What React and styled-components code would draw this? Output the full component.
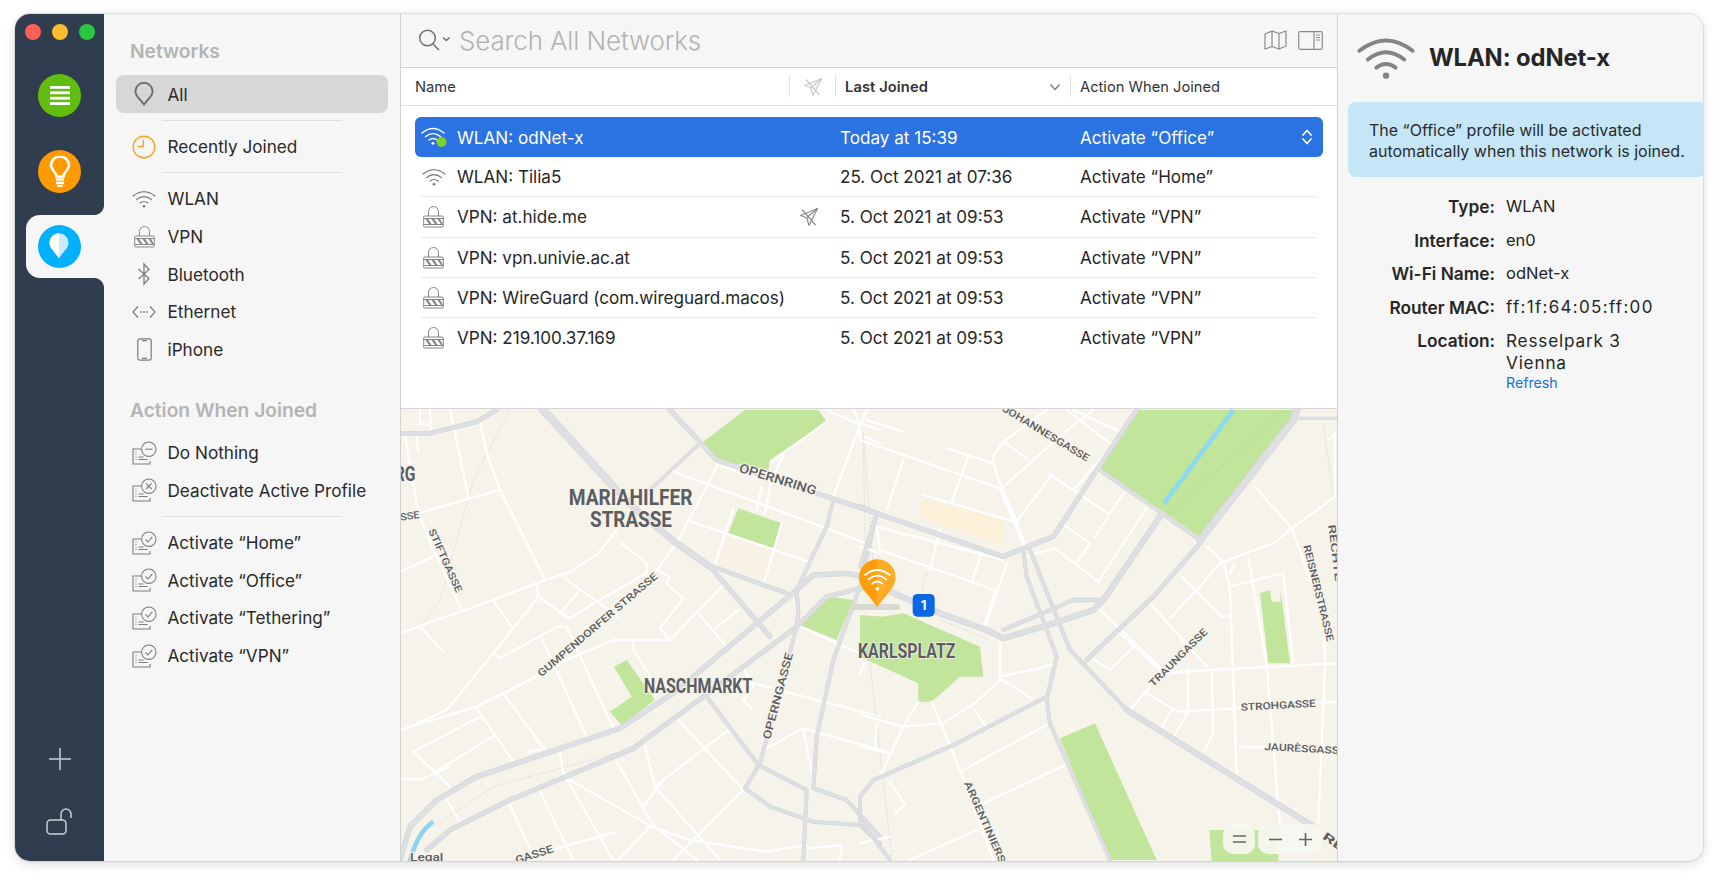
import React from "react";
import styled, { createGlobalStyle } from "styled-components";

const Global = createGlobalStyle`
  html, body { margin: 0; padding: 0; background: #fff; }
  body { font-family: Inter, "Liberation Sans", sans-serif; color: #262626; width: 1720px; height: 880px; overflow: hidden; }
  * { box-sizing: border-box; }
`;

const Stage = styled.div`padding: 14px 0 0 15px;`;
const Win = styled.div`
  width: 1688px; height: 847px; display: flex; border-radius: 15px; overflow: hidden;
  box-shadow: 0 0 2px rgba(0,0,0,.35), 0 3px 12px rgba(0,0,0,.13);
`;

/* ---------- rail ---------- */
const Rail = styled.nav`
  width: 89px; background: #2f3d4e; display: flex; flex-direction: column; align-items: center; padding-top: 10px;
`;
const Lights = styled.div`display: flex; gap: 11px; margin-bottom: 34px;`;
const Light = styled.span`width: 16px; height: 16px; border-radius: 50%; background: ${p => p.$c};`;
const RailCircle = styled.div`
  width: 43px; height: 43px; border-radius: 50%; background: ${p => p.$c};
  display: flex; align-items: center; justify-content: center; flex: none;
`;
const RailGap = styled.div`height: ${p => p.$h}px; flex: none;`;
const ActiveTab = styled.div`
  position: relative; align-self: flex-end; width: 78px; height: 63px; margin-top: 22px; background: #f6f6f6;
  border-radius: 14px 0 0 14px; display: flex; align-items: center; padding-left: 11.5px;
  &::before, &::after { content: ""; position: absolute; right: 0; width: 10px; height: 10px; }
  &::before { top: -10px; background: radial-gradient(circle at 0 0, #2f3d4e 9.5px, #f6f6f6 10.5px); }
  &::after { bottom: -10px; background: radial-gradient(circle at 0 100%, #2f3d4e 9.5px, #f6f6f6 10.5px); }
`;
const RailSpacer = styled.div`flex: 1;`;
const RailButton = styled.div`display: flex; align-items: center; justify-content: center; height: ${p => p.$h}px;`;

/* ---------- sidebar ---------- */
const Sidebar = styled.aside`
  width: 297px; background: #f6f6f6; border-right: 1px solid #d2d2d2; padding: 23px 12px 0; display: flex; flex-direction: column;
`;
const SectionTitle = styled.h2`
  margin: ${p => p.$top || 0}px 0 10px; padding-left: 14px; font-size: 19.2px; line-height: 28px; font-weight: 600; color: #b4b4b4;
`;
const NavRow = styled.div`
  height: ${p => p.$active ? 38 : 37.6}px; display: flex; align-items: center; padding-left: 10px; border-radius: 8px;
  background: ${p => p.$active ? "#d7d7d7" : "transparent"}; font-size: 17.15px; color: #2a2a2a; flex: none;
`;
const NavIcon = styled.span`width: 36px; margin-right: 5.5px; display: flex; justify-content: center; align-items: center; flex: none;`;
const NavRule = styled.div`height: 1px; width: 180px; margin: 6.5px 0 7.25px 46px; background: #e0e0e0; flex: none;`;

/* ---------- main ---------- */
const Main = styled.main`width: 937px; border-right: 1px solid #d2d2d2; display: flex; flex-direction: column; background: #fff;`;
const SearchBar = styled.div`
  height: 54px; background: #f6f6f6; border-bottom: 1px solid #d4d4d4; display: flex; align-items: center; padding: 0 14px 1px 17px; flex: none;
`;
const SearchPlaceholder = styled.span`font-size: 25.9px; font-weight: 300; color: #b3b3b3; margin-left: 7px; flex: 1; letter-spacing: -.1px;`;
const ToolIcons = styled.div`display: flex; gap: 11px; align-items: center;`;
const TablePane = styled.section`height: 340px; flex: none; display: flex; flex-direction: column; background: #fff;`;
const HeadRow = styled.div`
  height: 38px; border-bottom: 1px solid #e2e2e2; display: flex; align-items: center; padding-left: 14px; font-size: 14.7px; color: #333; flex: none;
`;
const HeadCell = styled.div`
  width: ${p => p.$w}px; display: flex; align-items: center; padding-left: ${p => p.$pad || 0}px; justify-content: ${p => p.$center ? "center" : "flex-start"};
  font-weight: ${p => p.$bold ? 600 : 400}; flex: none;
`;
const HeadLabel = styled.span`flex: 1; letter-spacing: .1px;`;
const HeadRule = styled.span`width: 1px; height: 21px; background: #dedede; flex: none;`;
const SortChevron = styled.svg`margin-right: 9px; flex: none;`;
const TableBody = styled.div`padding-top: 11px;`;
const Row = styled.div`
  height: ${p => p.$sel ? 40 : 39.33}px; margin: 0 14px; display: grid; grid-template-columns: 42px 383px 240px 1fr; align-items: center;
  background: ${p => p.$sel ? "#2b72e2" : "transparent"}; color: ${p => p.$sel ? "#fff" : "#262626"}; border-radius: 6px; font-size: 17.1px;
`;
const RowIcon = styled.span`display: flex; justify-content: center; padding-left: 1px; padding-right: 6px;`;
const NameCell = styled.span`display: flex; align-items: center; justify-content: space-between; padding-right: 21px;`;
const ActionCell = styled.span`display: flex; align-items: center; justify-content: space-between; padding-right: 10px;`;
const RowRule = styled.div`height: 1px; margin: 0 21px 0 20px; background: #e8e8e8;`;
const MapPane = styled.section`position: relative; flex: 1; border-top: 1px solid #d6d6d6; background: #f6f3ea; overflow: hidden;`;
const MapArt = styled.svg`display: block; width: 936px; height: 452px;`;
const MapControls = styled.div`position: absolute; right: 15px; bottom: 7px; display: flex; gap: 3px;`;
const MapBtn = styled.div`
  height: 30px; width: ${p => p.$w}px; border-radius: 10px; background: rgba(247,247,242,.9); color: #555; display: flex; align-items: center;
  justify-content: space-around; padding: 0 2px;
`;

/* ---------- inspector ---------- */
const Inspector = styled.aside`flex: 1; background: #f6f6f6; display: flex; flex-direction: column;`;
const InspHead = styled.header`height: 88px; display: flex; align-items: center; padding-left: 19px; gap: 14px; flex: none;`;
const InspTitle = styled.h1`margin: 0; font-size: 23.8px; font-weight: 700; color: #262626; letter-spacing: -.1px; padding-bottom: 1px;`;
const Notice = styled.p`
  margin: 0 0 13px 10px; height: 75px; padding: 18px 0 0 21px; background: #c5e6f6; border-radius: 8px 4px 4px 8px; font-size: 16px; line-height: 20.5px; color: #2a2a2a;
`;
const Details = styled.dl`margin: 0; display: grid; grid-template-columns: 157px 1fr; column-gap: 11px;`;
const Label = styled.dt`text-align: right; font-weight: 600; font-size: 17.3px; line-height: 33.6px;`;
const Value = styled.dd`margin: 0; font-size: ${p => p.$wide ? 17 : 16.5}px; line-height: 33.6px; letter-spacing: ${p => p.$wide ? "1.3px" : "0"};`;
const ValueStack = styled.dd`margin: 0; padding-top: 5.3px; font-size: 17.2px; line-height: 22px; letter-spacing: .8px;`;
const Refresh = styled.div`font-size: 14.2px; line-height: 16px; color: #1a6fe0; letter-spacing: 0; margin-top: 1px;`;

/* ---------- icons ---------- */
const WifiGlyph = ({ w = 24, h = 18, c = "#777", sw = 1.2 }) => (
  <svg width={w} height={h} viewBox="0 0 24 18" fill="none" stroke={c} strokeWidth={sw} strokeLinecap="round">
    <path d="M1 6Q12-2.5 23 6" /><path d="M4.500 9.600Q12 3.600 19.500 9.600" /><path d="M8 13Q12 10 16 13" />
    <circle cx="12" cy="16.300" r="1.300" fill={c} stroke="none" />
  </svg>
);
const LockGlyph = ({ c = "#8a8a8a" }) => (
  <svg width="21" height="23" viewBox="0 0 21 23" fill="none" stroke={c} strokeWidth="1">
    <path d="M5.500 11V6.500a5 5 0 0 1 10 0V11" />
    <rect x=".7" y="11" width="19.600" height="11" rx="1" />
    <path d="M.7 13.500h19.600M.7 19.500h19.600" />
    <path d="M2.500 14l3.500 5h2.600l-3.500-5zM8.500 14l3.500 5h2.600l-3.500-5zM14.500 14l3.500 5h2l-3-5z" fill={c} stroke="none" />
  </svg>
);
const Bt = () => (
  <svg width="16" height="24" viewBox="0 0 16 24" fill="none" stroke="#7f7f7f" strokeWidth="1.300"><path d="M2.500 7 13 16.500 8 22V2l5 5.500L2.500 17" /></svg>
);
const Eth = () => (
  <svg width="24" height="14" viewBox="0 0 24 14" fill="none" stroke="#7f7f7f" strokeWidth="1.200">
    <path d="M6 1.500.9 7 6 12.500M18 1.500 23.100 7 18 12.500" />
    <circle cx="9" cy="7" r=".9" fill="#7f7f7f" stroke="none" /><circle cx="12" cy="7" r=".9" fill="#7f7f7f" stroke="none" /><circle cx="15" cy="7" r=".9" fill="#7f7f7f" stroke="none" />
  </svg>
);
const Phone = () => (
  <svg width="15" height="23" viewBox="0 0 15 23" fill="none" stroke="#7f7f7f" strokeWidth="1.200">
    <rect x=".8" y=".8" width="13.400" height="21.400" rx="2.200" /><path d="M5 2.700h5M5 20.300h5" />
  </svg>
);
const PinOutline = () => (
  <svg width="20" height="24" viewBox="0 0 20 24" fill="none" stroke="#6f6f6f" strokeWidth="1.900">
    <path d="M10 22.600C7.500 18.400 1.400 14.500 1.400 9.400a8.600 8.600 0 0 1 17.200 0c0 5.100-6.100 9-8.600 13.200Z" />
  </svg>
);
const Clock = () => (
  <svg width="24" height="24" viewBox="0 0 24 24" fill="none" stroke="#f5a623" strokeWidth="1.400">
    <circle cx="12" cy="12" r="10.800" /><path d="M11.300 5v6.500H5.500" />
  </svg>
);
const Profile = ({ kind }) => (
  <svg width="25" height="24" viewBox="0 0 25 24" fill="none" stroke="#7d7d7d" strokeWidth="1.100">
    <path d="M9 8H1v15h17v-3" />
    <path d="M3.500 11h1M3.500 13.500h1M3.500 16h1M6.500 16h5M6.500 18.500h9M3.500 18.500h1" strokeWidth="1.200" />
    <circle cx="16.800" cy="8.200" r="7.200" fill="#f6f6f6" />
    {kind === "none" && <path d="M13 8.200h7.600" />}
    {kind === "x" && <path d="M14 5.400l5.600 5.600M19.600 5.400 14 11" />}
    {kind === "check" && <path d="M13.400 8.400l2.500 2.600 4.400-5.200" />}
  </svg>
);
const Plane = ({ c }) => (
  <svg width="20" height="20" viewBox="0 0 20 20" fill="none" stroke={c} strokeWidth="1.200" strokeLinejoin="round">
    <path d="M18.500 1.500 1.500 8.500l6.200 2.200 2.300 7.800z" /><path d="M18.500 1.500 7.700 10.700M3 2.500 16.500 18" />
  </svg>
);
const Stepper = () => (
  <svg width="12" height="16" viewBox="0 0 12 16" fill="none" stroke="#fff" strokeWidth="1.700" strokeLinecap="round" strokeLinejoin="round">
    <path d="M2 6 6 1.500 10 6M2 10l4 4.500L10 10" />
  </svg>
);

/* ---------- map data, in the 3x coordinates of two overlapping tiles ---------- */
const westWhite = [
  "60,30 60,70 90,75", "90,30 95,95", "150,30 205,290", "15,110 55,340 110,470 185,630", "50,110 55,155", "0,355 300,270",
  "240,70 260,160 300,270 435,540", "0,515 100,470", "0,700 280,600 410,550 510,515 590,465 650,390", "280,600 335,680", "65,685 130,755",
  "410,550 415,590 510,655 590,605 740,520 740,490 665,430", "495,525 500,540 655,650", "535,575 480,640 510,655", "415,590 280,760 140,930 30,980",
  "280,760 300,775 470,680 500,680 640,985", "425,715 560,1010", "0,990 230,920 420,825 500,780 640,720 810,720 970,555",
  "810,720 780,685 850,595 800,550 810,530 770,510 830,430 950,200", "700,725 700,750 770,860", "895,640 980,740", "945,685 1015,630",
  "310,880 435,1050", "230,925 340,1085", "40,1055 240,950", "40,1055 150,1160", "100,1120 285,1005", "0,1135 60,1140 150,1100", "385,1055 435,1045",
  "480,1060 490,1120 640,1380", "420,1175 520,1380", "330,1215 405,1380", "140,1200 185,1275", "650,1085 760,1275 890,1380",
  "510,1140 755,1280 870,1320 1100,1355 1220,1335", "735,1040 765,1160 960,1380", "765,1160 790,1140 985,990", "835,960 1030,1170", "1030,1170 820,1380",
  "730,1220 790,1140", "1060,850 1440,950", "1030,800 1060,860 1030,900 1055,925", "1100,1045 1210,985 1440,1050", "950,195 1300,300 1440,350",
  "820,215 1400,430", "860,360 1225,485", "1000,325 945,495", "1145,370 1095,540", "1085,260 1070,330", "1115,240 1095,340", "1115,185 1280,65",
  "1150,165 1115,240", "1360,30 1380,70 1440,90", "1280,30 1380,75 1300,290", "1395,110 1440,130", "1200,680 1400,770 1380,820", "350,1380 650,1295",
  "650,1385 750,1280", "1210,985 1245,1165", "1225,1345 1325,1335 1320,1380",
];
const eastWhite = [
  "20,30 0,80 0,120 420,265 490,435", "20,60 130,95", "260,145 400,190", "190,285 460,365", "130,180 80,330", "325,170 275,305",
  "400,170 430,125 560,30", "430,125 500,175", "400,165 400,190 425,265 470,365 495,435", "425,265 610,100 700,30", "570,225 745,340", "620,30 750,130",
  "640,270 790,100", "640,30 790,100", "575,225 470,365", "790,280 705,410", "860,325 715,545 585,445", "605,370 690,430 650,490", "585,445 490,470",
  "50,380 430,480", "50,385 60,450 405,570 375,670", "240,390 210,510", "365,460 335,545", "440,490 380,670", "0,440 60,460",
  "720,630 920,820 1050,810 1430,790", "690,770 750,810 825,735", "780,700 900,810", "870,610 1040,800", "930,655 1000,580 1085,485", "965,530 1085,650 1110,645",
  "1040,440 1090,485 1240,430 1295,385 1425,290", "1185,260 1295,385 1390,640 1395,790 1375,1270", "1090,485 1110,570 1130,1120", "1110,560 1270,520 1300,790",
  "1165,470 1220,790 1260,1280", "1125,490 1110,520", "870,860 815,925", "860,880 955,935 1130,925 1430,905", "985,810 985,935 945,1005", "1055,810 1060,1000 1035,1050",
  "935,930 905,980", "1140,1040 1430,1050", "420,730 420,840 350,905 250,970 130,980 0,945", "420,830 580,795", "420,835 515,895", "345,930 375,975",
  "175,905 130,980 60,1130", "215,905 300,1110 400,1380", "50,970 45,1045 90,1060", "0,1040 90,1060", "300,1115 560,975", "350,1220 615,1095", "150,1380 350,1290",
  "90,1145 135,1215 105,1240", "1405,120 1425,100 1425,290", "0,1330 90,1310",
];
const westGray = [
  [22, "430,30 640,260"], [18, "640,260 720,340 830,430 930,500"], [13, "930,500 1110,710"], [12, "0,100 90,100 230,65 290,30"],
  [13, "810,30 950,180 1280,290 1430,340"], [8, "750,270 900,130"], [14, "0,1380 30,1280 110,1200 230,1130 660,985 820,880 1190,570 1240,525 1340,520 1390,530"],
  [13, "80,1350 150,1290 330,1200 700,1045 910,890 1190,680 1280,590 1380,565 1440,565"], [11, "940,500 1160,580"], [10, "1300,300 1280,380 1190,570 1195,640 1190,680 1150,830 1080,1090 1035,1165 1110,1220 1240,1265 1380,1275 1440,1330"],
  [10, "920,890 1075,1095 1220,1170 1210,1380"], [10, "1380,560 1300,780 1250,1010 1240,1165 1340,1200 1440,1310"], [10, "1430,340 1380,560"],
];
const eastGray = [
  [13, "0,320 50,340 430,470 490,445 580,410 710,210 830,30"], [10, "50,340 0,500"], [16, "80,570 240,640 380,690 430,715 580,670 700,630 730,600 900,350"],
  [11, "430,690 640,600 730,600"], [10, "720,210 1020,420"], [20, "1020,420 1300,60 1310,30"], [12, "1020,430 880,590 680,780"],
  [10, "490,450 500,530 590,770 560,900 570,970 750,1380"], [10, "510,450 630,750 800,930"], [16, "800,930 1360,1280"], [10, "560,890 270,1040 40,1140 0,1190 0,1260 90,1380"],
  [8, "1320,55 1430,55"],
];
const westRails = ["330,30 220,240 120,600 60,680", "1390,100 1420,500", "100,1280 280,1160 700,1045"];
const eastRails = ["10,130 20,700 95,1370", "1390,70 1420,290", "200,520 180,590", "380,715 240,660"];
const Poly = ({ pts, w, c }) => <polyline points={pts} fill="none" stroke={c} strokeWidth={w} strokeLinejoin="round" strokeLinecap="round" />;
const RailLine = ({ pts }) => <polyline points={pts} fill="none" stroke="#d6d6d2" strokeWidth="2.500" strokeDasharray="7 5" />;
const MapLabel = ({ x, y, r = 0, len, size = 30, bold, children }) => (
  <text
    transform={`translate(${x} ${y}) rotate(${r})`} textLength={len} lengthAdjust="spacingAndGlyphs"
    fontFamily="Roboto, Inter, sans-serif" fontSize={size} fontWeight={bold ? 700 : 500} fill="#5b5d60"
    stroke="#f6f3ea" strokeWidth={bold ? 5 : 6} paintOrder="stroke"
  >{children}</text>
);
const CityMap = () => (
  <MapArt viewBox="401 409 936 452">
    <g transform="translate(400 400) scale(.33333)">
      <g fill="#c1e59a">
        <polygon points="910,125 1035,30 1255,30 1280,65 1110,180 1105,210 950,180" />
        <polygon points="1015,325 1145,370 1120,445 985,400" />
        <polygon points="642,800 680,780 765,900 665,975 630,935 695,890" />
        <polygon points="1200,675 1310,720 1360,600 1290,590" />
      </g>
      <polygon points="985,400 1120,445 1095,540 945,495" fill="#f7f2e5" />
      <path d="M30 1385Q50 1300 100 1265" fill="none" stroke="#8fd3ee" strokeWidth="14" />
      {westRails.map(p => <RailLine key={p} pts={p} />)}
      {westWhite.map(p => <Poly key={p} pts={p} w={7} c="#fff" />)}
      {westGray.map(([w, p]) => <Poly key={p} pts={p} w={w + 2} c="#cdced2" />)}
      {westGray.map(([w, p]) => <Poly key={p + "i"} pts={p} w={w} c="#dedfe2" />)}
      <MapLabel x={506} y={315} len={372} size={64} bold>MARIAHILFER</MapLabel>
      <MapLabel x={570} y={380} len={246} size={64} bold>STRASSE</MapLabel>
      <MapLabel x={732} y={880} len={325} size={60} bold>NASCHMARKT</MapLabel>
      <MapLabel x={1015} y={215} r={17} len={240} size={38}>OPERNRING</MapLabel>
      <MapLabel x={85} y={392} r={66} len={205} size={30}>STIFTGASSE</MapLabel>
      <MapLabel x={424} y={832} r={-40.5} len={462} size={30}>GUMPENDORFER STRASSE</MapLabel>
      <MapLabel x={1110} y={1020} r={-75} len={268} size={33}>OPERNGASSE</MapLabel>
      <MapLabel x={2} y={362} r={-8} len={58} size={30}>SSE</MapLabel>
      <MapLabel x={-16} y={242} len={62} size={58} bold>RG</MapLabel>
      <MapLabel x={350} y={1392} r={-18} len={118} size={32}>GASSE</MapLabel>
      <MapLabel x={30} y={1382} len={100} size={34}>Legal</MapLabel>
    </g>
    <g transform="translate(860 400) scale(.33333)">
      <g fill="#c1e59a">
        <polygon points="720,205 830,30 1300,30 1290,70 1020,410" />
        <polygon points="0,645 70,650 130,640 360,740 370,830 300,830 215,905 175,905 175,850 0,770" />
        <polygon points="600,1015 705,970 890,1380 750,1380" />
        <polygon points="1200,580 1230,570 1235,605 1262,605 1262,570 1290,790 1225,790" />
        <polygon points="1048,1290 1255,1290 1255,1384 1055,1384" />
      </g>
      <polygon points="190,295 430,360 425,435 180,350" fill="#fdf0d8" />
      <path d="M912 310 1120 30" fill="none" stroke="#8fd8ee" strokeWidth="14" />
      <path d="M925 345 1270 30" fill="none" stroke="#b9d4a0" strokeWidth="2" />
      {eastRails.map(p => <RailLine key={p} pts={p} />)}
      {eastWhite.map(p => <Poly key={p} pts={p} w={7} c="#fff" />)}
      {eastGray.map(([w, p]) => <Poly key={p} pts={p} w={w + 2} c="#cdced2" />)}
      {eastGray.map(([w, p]) => <Poly key={p + "i"} pts={p} w={w} c="#dedfe2" />)}
      <rect x="-30" y="612" width="150" height="18" rx="8" fill="#d9d9d4" />
      <MapLabel x={425} y={32} r={31} len={298} size={30}>JOHANNESGASSE</MapLabel>
      <MapLabel x={-6} y={773} len={292} size={58} bold>KARLSPLATZ</MapLabel>
      <MapLabel x={880} y={862} r={-45} len={232} size={30}>TRAUNGASSE</MapLabel>
      <MapLabel x={1143} y={932} r={-3} len={225} size={30}>STROHGASSE</MapLabel>
      <MapLabel x={1213} y={1050} r={3} len={244} size={30}>JAURÈSGASSE</MapLabel>
      <MapLabel x={1330} y={438} r={76} len={296} size={30}>REISNERSTRASSE</MapLabel>
      <MapLabel x={1405} y={375} r={83} len={170} size={30}>RECHTE</MapLabel>
      <MapLabel x={312} y={1150} r={66} len={310} size={30}>ARGENTINIERSTR</MapLabel>
      <MapLabel x={1385} y={1315} r={35} len={70} size={34} bold>RE</MapLabel>
      <defs>
        <linearGradient id="pinFill" x1="0" x2="1"><stop offset=".5" stopColor="#ff9d0a" /><stop offset=".5" stopColor="#ffab26" /></linearGradient>
      </defs>
      <path d="M52 622C22 580-3 562-3 532-3 502 22 478 52 478S107 502 107 532C107 562 82 580 52 622Z" fill="url(#pinFill)" />
      <g fill="none" stroke="#fff" strokeWidth="5.500" strokeLinecap="round">
        <path d="M15 525Q52 495 89 525" /><path d="M26 538Q52 516 78 538" /><path d="M37 551Q52 538 67 551" />
      </g>
      <circle cx="52" cy="566" r="5.500" fill="#fff" />
      <rect x="158" y="582" width="66" height="68" rx="14" fill="#0a66e4" />
      <text x="191" y="630" textAnchor="middle" fontFamily="Inter, sans-serif" fontWeight="700" fontSize="40" fill="#fff">1</text>
    </g>
  </MapArt>
);

const networks = [
  ["wifi", "WLAN: Tilia5", "25. Oct 2021 at 07:36", "Activate “Home”"],
  ["vpn", "VPN: at.hide.me", "5. Oct 2021 at 09:53", "Activate “VPN”", true],
  ["vpn", "VPN: vpn.univie.ac.at", "5. Oct 2021 at 09:53", "Activate “VPN”"],
  ["vpn", "VPN: WireGuard (com.wireguard.macos)", "5. Oct 2021 at 09:53", "Activate “VPN”"],
  ["vpn", "VPN: 219.100.37.169", "5. Oct 2021 at 09:53", "Activate “VPN”"],
];

const Nav = ({ icon, children, active }) => (
  <NavRow $active={active}><NavIcon>{icon}</NavIcon>{children}</NavRow>
);

export default function App() {
  return (
    <Stage>
      <Global />
      <Win>
        <Rail>
          <Lights><Light $c="#ff5f57" /><Light $c="#febc2e" /><Light $c="#28c840" /></Lights>
          <RailCircle $c="#63bd10">
            <svg width="20" height="19" viewBox="0 0 20 19" fill="#fff"><rect y="0" width="20" height="2.800" /><rect y="5.400" width="20" height="2.800" /><rect y="10.800" width="20" height="2.800" /><rect y="16.200" width="20" height="2.800" /></svg>
          </RailCircle>
          <RailGap $h={32.5} />
          <RailCircle $c="#ff9a00">
            <svg width="22" height="31" viewBox="0 0 22 31" fill="none" stroke="#fff" strokeWidth="2.600">
              <path d="M7.500 20.500C7.500 16 2 14 2 9.500a9 9 0 0 1 18 0c0 4.500-5.500 6.500-5.500 11z" />
              <path d="M7 23.500h8M7 27h8" /><path d="M8.500 30h5" strokeWidth="1.800" />
            </svg>
          </RailCircle>
          <ActiveTab>
            <RailCircle $c="#00b1ff">
              <svg width="20" height="26" viewBox="0 0 20 26">
                <path d="M10 25.500C7 20 .5 15.500.5 9.800a9.500 9.500 0 0 1 19 0C19.500 15.500 13 20 10 25.500Z" fill="#cbebfd" />
                <path d="M10 25.500C7 20 .5 15.500.5 9.800A9.500 9.500 0 0 1 10 .3Z" fill="#fff" />
              </svg>
            </RailCircle>
          </ActiveTab>
          <RailSpacer />
          <RailButton $h={47}>
            <svg width="24" height="24" viewBox="0 0 24 24" stroke="#c9ced3" strokeWidth="1.500"><path d="M12 1v22M1 12h22" /></svg>
          </RailButton>
          <RailGap $h={19.5} />
          <RailButton $h={40}>
            <svg width="28" height="28" viewBox="0 0 28 28" fill="none" stroke="#c9ced3" strokeWidth="1.500">
              <rect x="1" y="12" width="19" height="14" rx="3.500" /><path d="M15 12V6a5 5 0 0 1 10 0v4" />
            </svg>
          </RailButton>
          <RailGap $h={19} />
        </Rail>

        <Sidebar>
          <SectionTitle>Networks</SectionTitle>
          <Nav active icon={<PinOutline />}>All</Nav>
          <NavRule />
          <Nav icon={<Clock />}>Recently Joined</Nav>
          <NavRule />
          <Nav icon={<WifiGlyph />}>WLAN</Nav>
          <Nav icon={<LockGlyph />}>VPN</Nav>
          <Nav icon={<Bt />}>Bluetooth</Nav>
          <Nav icon={<Eth />}>Ethernet</Nav>
          <Nav icon={<Phone />}>iPhone</Nav>
          <SectionTitle $top={28}>Action When Joined</SectionTitle>
          <Nav icon={<Profile kind="none" />}>Do Nothing</Nav>
          <Nav icon={<Profile kind="x" />}>Deactivate Active Profile</Nav>
          <NavRule />
          <Nav icon={<Profile kind="check" />}>Activate “Home”</Nav>
          <Nav icon={<Profile kind="check" />}>Activate “Office”</Nav>
          <Nav icon={<Profile kind="check" />}>Activate “Tethering”</Nav>
          <Nav icon={<Profile kind="check" />}>Activate “VPN”</Nav>
        </Sidebar>

        <Main>
          <SearchBar>
            <svg width="34" height="24" viewBox="0 0 34 24" fill="none" stroke="#707070" strokeWidth="1.500">
              <circle cx="9.500" cy="10" r="7.800" /><path d="M15 16l6 6" /><path d="M25 9.500l3.300 3 3.300-3" />
            </svg>
            <SearchPlaceholder>Search All Networks</SearchPlaceholder>
            <ToolIcons>
              <svg width="23" height="20" viewBox="0 0 23 20" fill="none" stroke="#8b8b8b" strokeWidth="1.200" strokeLinejoin="round">
                <path d="M1 4l7-3 7 2.500L22 1v15l-7 3-7-2.500-7 2.500zM8 1v15.500M15 3.500V19" />
              </svg>
              <svg width="25" height="19" viewBox="0 0 25 19" fill="none" stroke="#8b8b8b" strokeWidth="1.200">
                <rect x=".7" y=".7" width="23.600" height="17.600" rx="1.500" /><path d="M16 .7v17.600M18 4h4M18 6.500h4M18 9h4" />
              </svg>
            </ToolIcons>
          </SearchBar>
          <TablePane>
            <HeadRow>
              <HeadCell $w={374}>Name</HeadCell>
              <HeadRule />
              <HeadCell $w={45} $center><Plane c="#c9c9c9" /></HeadCell>
              <HeadRule />
              <HeadCell $w={234} $pad={9} $bold>
                <HeadLabel>Last Joined</HeadLabel>
                <SortChevron width="12" height="8" viewBox="0 0 12 8" fill="none" stroke="#777" strokeWidth="1.200"><path d="M1.500 1.500 6 6.500l4.500-5" /></SortChevron>
              </HeadCell>
              <HeadRule />
              <HeadCell $w={240} $pad={9}>Action When Joined</HeadCell>
            </HeadRow>
            <TableBody>
              <Row $sel>
                <RowIcon>
                  <svg width="26" height="22" viewBox="0 0 26 22" fill="none" stroke="#fff" strokeWidth="1.400" strokeLinecap="round">
                    <path d="M1 7Q12-2 23 7" /><path d="M4.500 10.600Q12 4.600 19.500 10.600" /><path d="M8 14Q12 11 16 14" />
                    <circle cx="12" cy="17.300" r="1.400" fill="#fff" stroke="none" />
                    <circle cx="20.500" cy="16" r="5" fill="#7ed321" stroke="none" />
                  </svg>
                </RowIcon>
                <span>WLAN: odNet-x</span>
                <span>Today at 15:39</span>
                <ActionCell>Activate “Office”<Stepper /></ActionCell>
              </Row>
              {networks.map(([kind, name, date, action, pinned], i) => (
                <React.Fragment key={name}>
                  <Row>
                    <RowIcon>{kind === "wifi" ? <WifiGlyph c="#6f6f6f" /> : <LockGlyph c="#848484" />}</RowIcon>
                    <NameCell>{name}{pinned && <Plane c="#8a8a8a" />}</NameCell>
                    <span>{date}</span>
                    <span>{action}</span>
                  </Row>
                  {i < networks.length - 1 && <RowRule />}
                </React.Fragment>
              ))}
            </TableBody>
          </TablePane>
          <MapPane>
            <CityMap />
            <MapControls>
              <MapBtn $w={32}>
                <svg width="15" height="10" viewBox="0 0 15 10" stroke="#666" strokeWidth="1.600"><path d="M1 2h13M1 8h13" /></svg>
              </MapBtn>
              <MapBtn $w={64}>
                <svg width="15" height="15" viewBox="0 0 15 15" stroke="#666" strokeWidth="1.600"><path d="M1 7.500h13" /></svg>
                <svg width="15" height="15" viewBox="0 0 15 15" stroke="#666" strokeWidth="1.600"><path d="M1 7.500h13M7.500 1v13" /></svg>
              </MapBtn>
            </MapControls>
          </MapPane>
        </Main>

        <Inspector>
          <InspHead>
            <WifiGlyph w={58} h={44} c="#848484" sw={1.6} />
            <InspTitle>WLAN: odNet-x</InspTitle>
          </InspHead>
          <Notice>The “Office” profile will be activated<br />automatically when this network is joined.</Notice>
          <Details>
            <Label>Type:</Label><Value>WLAN</Value>
            <Label>Interface:</Label><Value>en0</Value>
            <Label>Wi-Fi Name:</Label><Value>odNet-x</Value>
            <Label>Router MAC:</Label><Value $wide>ff:1f:64:05:ff:00</Value>
            <Label>Location:</Label>
            <ValueStack>Resselpark 3<br />Vienna<Refresh>Refresh</Refresh></ValueStack>
          </Details>
        </Inspector>
      </Win>
    </Stage>
  );
}
